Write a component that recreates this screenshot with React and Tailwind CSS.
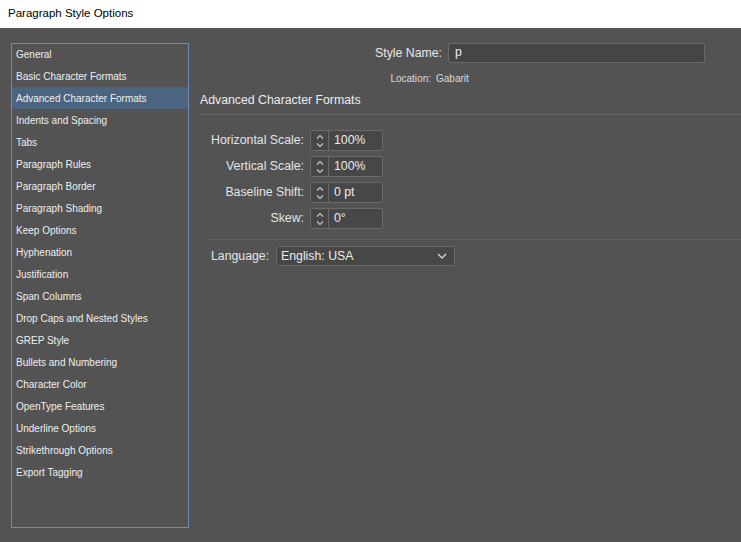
const sections = [
  "General",
  "Basic Character Formats",
  "Advanced Character Formats",
  "Indents and Spacing",
  "Tabs",
  "Paragraph Rules",
  "Paragraph Border",
  "Paragraph Shading",
  "Keep Options",
  "Hyphenation",
  "Justification",
  "Span Columns",
  "Drop Caps and Nested Styles",
  "GREP Style",
  "Bullets and Numbering",
  "Character Color",
  "OpenType Features",
  "Underline Options",
  "Strikethrough Options",
  "Export Tagging",
];

const fields = [
  { label: "Horizontal Scale:", value: "100%" },
  { label: "Vertical Scale:", value: "100%" },
  { label: "Baseline Shift:", value: "0 pt" },
  { label: "Skew:", value: "0°" },
];

function Spinner() {
  return (
    <svg width="10" height="16" viewBox="0 0 10 16" fill="none" stroke="#c8c8c8" strokeWidth="1.1">
      <path d="M2 5.5 L5 2.5 L8 5.5" />
      <path d="M2 10.5 L5 13.5 L8 10.5" />
    </svg>
  );
}

function NumberField({ label, value }) {
  return (
    <div className="flex items-center h-[21px]">
      <div className="w-[110px] whitespace-nowrap text-right pr-[6px] text-[12.3px] text-[#e4e4e4]">{label}</div>
      <div className="flex h-[21px] w-[73px] border border-[#6a6a6a] rounded-[2px] bg-[#474747]">
        <div className="w-[18px] flex items-center justify-center border-r border-[#6a6a6a]">
          <Spinner />
        </div>
        <div className="pl-[5px] text-[12.3px] leading-[19px] text-[#ececec]">{value}</div>
      </div>
    </div>
  );
}

export default function App() {
  return (
    <div className="w-[741px] h-[542px] flex flex-col bg-[#535353] font-['Liberation_Sans',sans-serif] overflow-hidden">
      <div className="h-[28px] bg-white flex items-center pl-[8px] text-[11.5px] text-black">
        Paragraph Style Options
      </div>
      <div className="flex-1 flex pt-[15px] pb-[14px]">
        <div className="ml-[11px] w-[178px] border border-[#6e8db5] flex flex-col">
          <div className="-mt-px flex flex-col">
            {sections.map((s) => (
              <div
                key={s}
                className={
                  "h-[22px] flex items-center pl-[4px] text-[10px] text-[#efefef] " +
                  (s === "Advanced Character Formats" ? "bg-[#4b6580]" : "")
                }
              >
                {s}
              </div>
            ))}
          </div>
        </div>
        <div className="flex-1 flex flex-col pl-[11px]">
          <div className="flex items-center h-[20px]">
            <div className="w-[248px] whitespace-nowrap text-right pr-[6px] text-[12.3px] text-[#e8e8e8]">Style Name:</div>
            <div className="w-[257px] h-[20px] border border-[#6a6a6a] rounded-[2px] bg-[#454545] pl-[6px] text-[12.3px] leading-[17px] text-[#ececec]">
              p
            </div>
          </div>
          <div className="flex h-[15px] mt-[8px] items-center text-[10px] text-[#dcdcdc]">
            <div className="w-[236px] text-right pr-[5px]">Location:</div>
            <div>Gabarit</div>
          </div>
          <div className="mt-[6px] h-[17px] flex items-center text-[12.3px] text-[#ececec]">
            Advanced Character Formats
          </div>
          <div className="mt-[5px] h-px bg-[#666666]" />
          <div className="flex flex-col gap-[5px] mt-[15px]">
            {fields.map((f) => (
              <NumberField key={f.label} label={f.label} value={f.value} />
            ))}
          </div>
          <div className="mt-[10px] ml-[8px] h-px bg-[#616161]" />
          <div className="flex items-center mt-[6px] ml-[11px] h-[20px]">
            <div className="w-[65px] text-[12.3px] text-[#e4e4e4]">Language:</div>
            <div className="w-[179px] h-[20px] border border-[#6a6a6a] rounded-[2px] bg-[#474747] flex items-center justify-between pl-[4px] pr-[7px]">
              <span className="text-[12.3px] text-[#ececec]">English: USA</span>
              <svg width="10" height="6" viewBox="0 0 10 6" fill="none" stroke="#d8d8d8" strokeWidth="1.3">
                <path d="M1 1 L5 5 L9 1" />
              </svg>
            </div>
          </div>
        </div>
      </div>
    </div>
  );
}
